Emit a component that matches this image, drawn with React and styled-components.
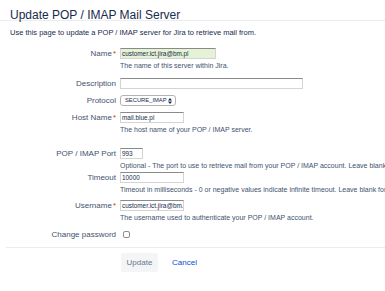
import React from 'react';
import styled, { createGlobalStyle } from 'styled-components';

const Global = createGlobalStyle`
  html, body { margin: 0; padding: 0; background: #fff; }
  body { font-family: "Liberation Sans", Arial, sans-serif; color: #172b4d; }
  * { box-sizing: border-box; }
`;

const Page = styled.div`
  width: 385px;
  height: 291px;
  overflow: hidden;
`;

const Header = styled.header`
  padding: 8px 0 0 10px;
  border-bottom: 1px solid #ebecf0;
  height: 21px;
`;

const Title = styled.h1`
  margin: 0;
  font-size: 12px;
  line-height: 14px;
  font-weight: 400;
  color: #172b4d;
  white-space: nowrap;
`;

const Intro = styled.p`
  margin: 7px 0 0 10px;
  font-size: 7.5px;
  line-height: 10px;
  color: #172b4d;
  white-space: nowrap;
`;

const Form = styled.form`
  margin: 0;
`;

const Field = styled.div`
  display: grid;
  grid-template-columns: 116px 1fr;
  column-gap: 4px;
  margin-top: ${(p) => p.$gap}px;
`;

const Label = styled.label`
  text-align: right;
  font-size: 8px;
  line-height: 11px;
  height: 11px;
  color: #42526e;
  white-space: nowrap;
`;

const Req = styled.span`
  color: #de350b;
  margin-left: 1px;
  font-size: 8px;
`;

const Control = styled.div`
  min-width: 0;
  display: flex;
  flex-direction: column;
  align-items: flex-start;
`;

const Input = styled.div`
  width: ${(p) => p.$w}px;
  height: 11px;
  border: 1px solid #d4d4d4;
  border-top-color: #8a8a8a;
  background: ${(p) => (p.$filled ? '#e6f2d6' : '#fff')};
  font-size: 6.4px;
  line-height: 9px;
  padding: 0 1px;
  color: #172b4d;
  white-space: nowrap;
  overflow: hidden;
`;

const Select = styled.div`
  display: flex;
  align-items: center;
  justify-content: space-between;
  width: 56px;
  height: 11px;
  border: 1px solid #b3b3b3;
  border-radius: 3px;
  background: #fff;
  padding: 0 3px 0 4px;
  font-size: 5.8px;
  line-height: 9px;
  color: #172b4d;
  white-space: nowrap;

  svg {
    flex-shrink: 0;
  }
`;

const Help = styled.div`
  margin-top: 2px;
  font-size: 7px;
  line-height: 9px;
  color: #42526e;
  white-space: nowrap;
`;

const Check = styled.span`
  display: block;
  width: 7px;
  height: 7px;
  margin: 2px 0 0 3px;
  border: 1px solid #8f8f8f;
  border-radius: 2px;
  background: #fff;
`;

const Footer = styled.div`
  margin: 7px 0 0 6px;
  border-top: 1px solid #ebecf0;
  padding: 5px 0 0 115px;
  display: flex;
  align-items: center;
  gap: 14px;
`;

const Button = styled.button`
  width: 37px;
  height: 19px;
  border: none;
  border-radius: 2px;
  background: #f4f5f7;
  color: #6b778c;
  font-family: inherit;
  font-size: 8px;
  padding: 0;
`;

const LinkButton = styled.a`
  color: #0052cc;
  font-size: 8px;
  text-decoration: none;
`;

const Arrows = () => (
  <svg width="4" height="6" viewBox="0 0 4 6">
    <path d="M0 2.4 L2 0 L4 2.4 Z M0 3.6 L2 6 L4 3.6 Z" fill="#172b4d" />
  </svg>
);

export default function App() {
  return (
    <Page>
      <Global />
      <Header>
        <Title>Update POP / IMAP Mail Server</Title>
      </Header>
      <Intro>Use this page to update a POP / IMAP server for Jira to retrieve mail from.</Intro>
      <Form>
        <Field $gap={10}>
          <Label>Name<Req>*</Req></Label>
          <Control>
            <Input $w={96} $filled>customer.ict.jira@bm.pl</Input>
            <Help>The name of this server within Jira.</Help>
          </Control>
        </Field>
        <Field $gap={8}>
          <Label>Description</Label>
          <Control>
            <Input $w={183} />
          </Control>
        </Field>
        <Field $gap={6}>
          <Label>Protocol</Label>
          <Control>
            <Select>
              <span>SECURE_IMAP</span>
              <Arrows />
            </Select>
          </Control>
        </Field>
        <Field $gap={6}>
          <Label>Host Name<Req>*</Req></Label>
          <Control>
            <Input $w={64}>mail.blue.pl</Input>
            <Help>The host name of your POP / IMAP server.</Help>
          </Control>
        </Field>
        <Field $gap={14}>
          <Label>POP / IMAP Port</Label>
          <Control>
            <Input $w={23}>993</Input>
            <Help>Optional - The port to use to retrieve mail from your POP / IMAP account. Leave blank for default port.</Help>
          </Control>
        </Field>
        <Field $gap={2}>
          <Label>Timeout</Label>
          <Control>
            <Input $w={64}>10000</Input>
            <Help>Timeout in milliseconds - 0 or negative values indicate infinite timeout. Leave blank for default (10000 ms).</Help>
          </Control>
        </Field>
        <Field $gap={6}>
          <Label>Username<Req>*</Req></Label>
          <Control>
            <Input $w={64}>customer.ict.jira@bm.pl</Input>
            <Help>The username used to authenticate your POP / IMAP account.</Help>
          </Control>
        </Field>
        <Field $gap={7}>
          <Label>Change password</Label>
          <Control>
            <Check />
          </Control>
        </Field>
        <Footer>
          <Button type="button">Update</Button>
          <LinkButton href="#">Cancel</LinkButton>
        </Footer>
      </Form>
    </Page>
  );
}
